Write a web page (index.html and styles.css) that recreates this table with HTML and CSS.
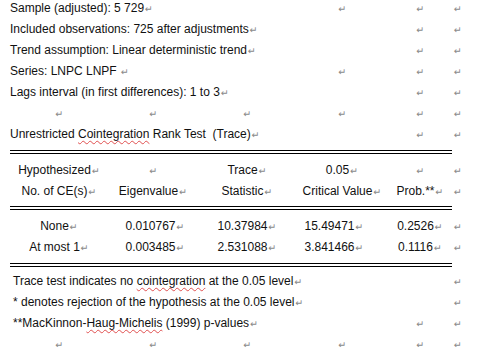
FILE: index.html
```html
<!DOCTYPE html>
<html>
<head>
<meta charset="utf-8">
<link rel="stylesheet" href="styles.css">
</head>
<body>
<div class="doc">
  <div class="block top">
    <div class="row"><div class="cell left span3">Sample (adjusted): 5 729<span class="pm">↵</span></div><div class="cell"><span class="pm">↵</span></div><div class="cell"><span class="pm">↵</span></div><div class="end"><span class="pm">↵</span></div></div>
    <div class="row"><div class="cell left span4">Included observations: 725 after adjustments<span class="pm">↵</span></div><div class="cell"><span class="pm">↵</span></div><div class="end"><span class="pm">↵</span></div></div>
    <div class="row"><div class="cell left span4">Trend assumption: Linear deterministic trend<span class="pm">↵</span></div><div class="cell"><span class="pm">↵</span></div><div class="end"><span class="pm">↵</span></div></div>
    <div class="row"><div class="cell left span3">Series: LNPC LNPF <span class="pm">↵</span></div><div class="cell"><span class="pm">↵</span></div><div class="cell"><span class="pm">↵</span></div><div class="end"><span class="pm">↵</span></div></div>
    <div class="row"><div class="cell left span4">Lags interval (in first differences): 1 to 3<span class="pm">↵</span></div><div class="cell"><span class="pm">↵</span></div><div class="end"><span class="pm">↵</span></div></div>
    <div class="row"><div class="cell"><span class="pm">↵</span></div><div class="cell"><span class="pm">↵</span></div><div class="cell"><span class="pm">↵</span></div><div class="cell"><span class="pm">↵</span></div><div class="cell"><span class="pm">↵</span></div><div class="end"><span class="pm">↵</span></div></div>
    <div class="row"><div class="cell left span4">Unrestricted <span class="spell">Cointegration</span> Rank Test&nbsp; (Trace)<span class="pm">↵</span></div><div class="cell"><span class="pm">↵</span></div><div class="end"><span class="pm">↵</span></div></div>
  </div>
  <div class="block head">
    <div class="row"><div class="cell">Hypothesized<span class="pm">↵</span></div><div class="cell"><span class="pm">↵</span></div><div class="cell">Trace<span class="pm">↵</span></div><div class="cell">0.05<span class="pm">↵</span></div><div class="cell"><span class="pm">↵</span></div><div class="end"><span class="pm">↵</span></div></div>
    <div class="row"><div class="cell">No. of CE(s)<span class="pm">↵</span></div><div class="cell">Eigenvalue<span class="pm">↵</span></div><div class="cell">Statistic<span class="pm">↵</span></div><div class="cell">Critical Value<span class="pm">↵</span></div><div class="cell">Prob.**<span class="pm">↵</span></div><div class="end"><span class="pm">↵</span></div></div>
  </div>
  <div class="block data">
    <div class="row"><div class="cell">None<span class="pm">↵</span></div><div class="cell num">0.010767<span class="pm">↵</span></div><div class="cell">10.37984<span class="pm">↵</span></div><div class="cell num">15.49471<span class="pm">↵</span></div><div class="cell">0.2526<span class="pm">↵</span></div><div class="end"><span class="pm">↵</span></div></div>
    <div class="row"><div class="cell">At most 1<span class="pm">↵</span></div><div class="cell num">0.003485<span class="pm">↵</span></div><div class="cell">2.531088<span class="pm">↵</span></div><div class="cell num">3.841466<span class="pm">↵</span></div><div class="cell">0.1116<span class="pm">↵</span></div><div class="end"><span class="pm">↵</span></div></div>
  </div>
  <div class="block notes">
    <div class="row"><div class="cell note span5">Trace test indicates no <span class="spell">cointegration</span> at the 0.05 level<span class="pm">↵</span></div><div class="end"><span class="pm">↵</span></div></div>
    <div class="row"><div class="cell note span5">* denotes rejection of the hypothesis at the 0.05 level<span class="pm">↵</span></div><div class="end"><span class="pm">↵</span></div></div>
    <div class="row"><div class="cell note span4">**MacKinnon-<span class="spell">Haug-Michelis</span> (1999) p-values<span class="pm">↵</span></div><div class="cell"><span class="pm">↵</span></div><div class="end"><span class="pm">↵</span></div></div>
    <div class="row"><div class="cell"><span class="pm">↵</span></div><div class="cell"><span class="pm">↵</span></div><div class="cell"><span class="pm">↵</span></div><div class="cell"><span class="pm">↵</span></div><div class="cell"><span class="pm">↵</span></div><div class="end"><span class="pm">↵</span></div></div>
  </div>
</div>
</body>
</html>
```

FILE: styles.css
```css
html, body {
  margin: 0;
  padding: 0;
  background: #ffffff;
}
body {
  font-family: "Liberation Sans", Arial, sans-serif;
  font-size: 12px;
  color: #111111;
  overflow: hidden;
}
.doc {
  margin: -2px 0 0 10px;
  width: 470px;
}
.block {
  width: 442px;
}
.row {
  display: grid;
  grid-template-columns: 98px 90px 98px 92px 64px 28px;
  height: 21px;
  line-height: 21px;
  width: 470px;
}
.cell {
  text-align: center;
  white-space: nowrap;
}
.left {
  text-align: left;
}
.note {
  text-align: left;
  padding-left: 3px;
}
.span3 { grid-column: span 3; }
.span4 { grid-column: span 4; }
.span5 { grid-column: span 5; }
.num {
  padding-left: 4px;
}
.data .cell.num:nth-child(4) {
  padding-left: 0;
  padding-right: 16px;
}
.end {
  padding-left: 1px;
}
.pm {
  font-family: "DejaVu Sans", sans-serif;
  font-size: 9.5px;
  color: #8a8a8a;
  margin-left: 1px;
}
.spell {
  text-decoration: underline wavy #e05050;
  text-decoration-thickness: 1px;
  text-underline-offset: 2px;
}
.head {
  margin-top: 5px;
  border-top: 4px double #000000;
  padding: 6px 0 4px;
}
.data {
  border-top: 4px double #000000;
  padding: 6px 0 5px;
}
.notes {
  border-top: 4px double #000000;
  padding-top: 4px;
}
```
